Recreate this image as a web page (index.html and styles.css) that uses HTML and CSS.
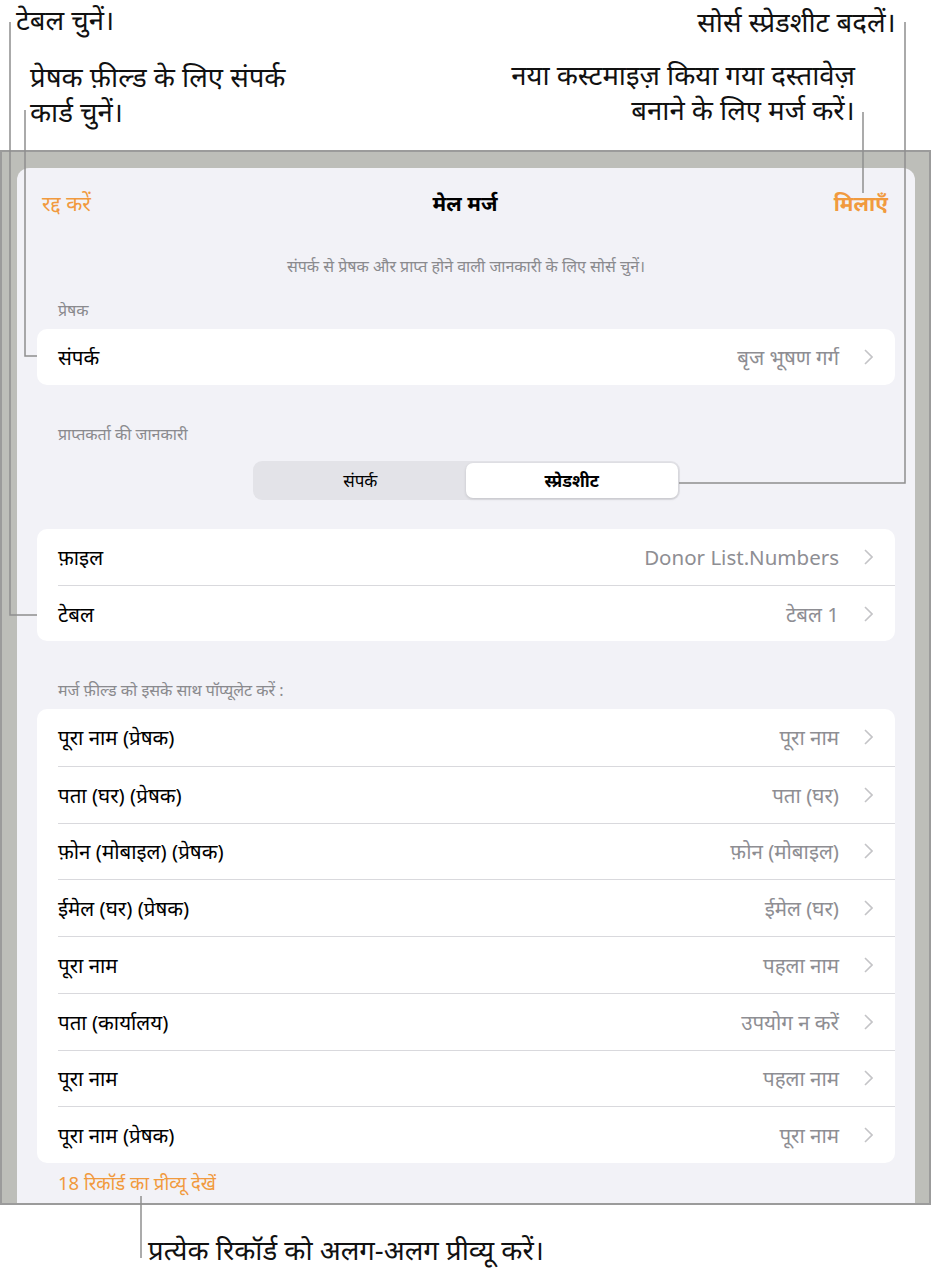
FILE: index.html
```html
<!DOCTYPE html>
<html lang="hi">
<head>
    <meta charset="UTF-8">
    <title>मेल मर्ज</title>
    <link rel="stylesheet" href="styles.css">
</head>
<body>
<div class="page">
    <div class="notes-top">
        <div class="notes-left">
            <p class="note note-table">टेबल चुनें।</p>
            <p class="note note-card">प्रेषक फ़ील्ड के लिए संपर्क<br>कार्ड चुनें।</p>
        </div>
        <div class="notes-right">
            <p class="note note-source">सोर्स स्प्रेडशीट बदलें।</p>
            <p class="note note-merge">नया कस्टमाइज़ किया गया दस्तावेज़<br>बनाने के लिए मर्ज करें।</p>
        </div>
    </div>

    <div class="device">
        <div class="sheet">
            <div class="nav">
                <span class="nav-cancel">रद्द करें</span>
                <span class="nav-title">मेल मर्ज</span>
                <span class="nav-merge">मिलाएँ</span>
            </div>
            <p class="hint">संपर्क से प्रेषक और प्राप्त होने वाली जानकारी के लिए सोर्स चुनें।</p>

            <p class="group-label">प्रेषक</p>
            <ul class="card">
                <li class="row">
                    <span class="row-label">संपर्क</span>
                    <span class="row-value">बृज भूषण गर्ग</span>
                    <svg class="chev" width="9" height="16" viewBox="0 0 9 16"><path d="M1 1l7 7-7 7"/></svg>
                </li>
            </ul>

            <p class="group-label group-label-gap">प्राप्तकर्ता की जानकारी</p>
            <div class="segment">
                <span class="seg-item">संपर्क</span>
                <span class="seg-item seg-on">स्प्रेडशीट</span>
            </div>

            <ul class="card card-file">
                <li class="row">
                    <span class="row-label">फ़ाइल</span>
                    <span class="row-value">Donor List.Numbers</span>
                    <svg class="chev" width="9" height="16" viewBox="0 0 9 16"><path d="M1 1l7 7-7 7"/></svg>
                </li>
                <li class="row">
                    <span class="row-label">टेबल</span>
                    <span class="row-value">टेबल 1</span>
                    <svg class="chev" width="9" height="16" viewBox="0 0 9 16"><path d="M1 1l7 7-7 7"/></svg>
                </li>
            </ul>

            <p class="group-label group-label-gap">मर्ज फ़ील्ड को इसके साथ पॉप्यूलेट करें :</p>
            <ul class="card card-fields">
                <li class="row">
                    <span class="row-label">पूरा नाम (प्रेषक)</span>
                    <span class="row-value">पूरा नाम</span>
                    <svg class="chev" width="9" height="16" viewBox="0 0 9 16"><path d="M1 1l7 7-7 7"/></svg>
                </li>
                <li class="row">
                    <span class="row-label">पता (घर) (प्रेषक)</span>
                    <span class="row-value">पता (घर)</span>
                    <svg class="chev" width="9" height="16" viewBox="0 0 9 16"><path d="M1 1l7 7-7 7"/></svg>
                </li>
                <li class="row">
                    <span class="row-label">फ़ोन (मोबाइल) (प्रेषक)</span>
                    <span class="row-value">फ़ोन (मोबाइल)</span>
                    <svg class="chev" width="9" height="16" viewBox="0 0 9 16"><path d="M1 1l7 7-7 7"/></svg>
                </li>
                <li class="row">
                    <span class="row-label">ईमेल (घर) (प्रेषक)</span>
                    <span class="row-value">ईमेल (घर)</span>
                    <svg class="chev" width="9" height="16" viewBox="0 0 9 16"><path d="M1 1l7 7-7 7"/></svg>
                </li>
                <li class="row">
                    <span class="row-label">पूरा नाम</span>
                    <span class="row-value">पहला नाम</span>
                    <svg class="chev" width="9" height="16" viewBox="0 0 9 16"><path d="M1 1l7 7-7 7"/></svg>
                </li>
                <li class="row">
                    <span class="row-label">पता (कार्यालय)</span>
                    <span class="row-value">उपयोग न करें</span>
                    <svg class="chev" width="9" height="16" viewBox="0 0 9 16"><path d="M1 1l7 7-7 7"/></svg>
                </li>
                <li class="row">
                    <span class="row-label">पूरा नाम</span>
                    <span class="row-value">पहला नाम</span>
                    <svg class="chev" width="9" height="16" viewBox="0 0 9 16"><path d="M1 1l7 7-7 7"/></svg>
                </li>
                <li class="row">
                    <span class="row-label">पूरा नाम (प्रेषक)</span>
                    <span class="row-value">पूरा नाम</span>
                    <svg class="chev" width="9" height="16" viewBox="0 0 9 16"><path d="M1 1l7 7-7 7"/></svg>
                </li>
            </ul>

            <p class="preview-link">18 रिकॉर्ड का प्रीव्यू देखें</p>
        </div>
    </div>

    <p class="note note-preview">प्रत्येक रिकॉर्ड को अलग-अलग प्रीव्यू करें।</p>

    <!-- callout leader lines -->
    <svg class="leaders" width="931" height="1269" viewBox="0 0 931 1269">
        <path d="M10 22V615H37"/>
        <path d="M25 110V356H37"/>
        <path d="M905 22V483H679"/>
        <path d="M863 112V193"/>
        <path d="M141 1196V1258"/>
    </svg>
</div>
</body>
</html>
```

FILE: styles.css
```css
* {
    margin: 0;
    padding: 0;
    box-sizing: border-box;
}

body {
    background: #fff;
    font-family: "Noto Sans", "Noto Sans Devanagari", sans-serif;
    color: #000;
}

.page {
    position: relative;
    width: 931px;
    height: 1269px;
    overflow: hidden;
}

/* callout texts */
.notes-top {
    display: flex;
    justify-content: space-between;
    height: 150px;
}

.note {
    font-size: 27.5px;
    line-height: 34px;
    color: #111;
}

.notes-left {
    padding-left: 16px;
}

.note-table {
    margin-top: 3px;
}

.note-card {
    margin-top: 22px;
    margin-left: 14px;
    line-height: 35px;
}

.notes-right {
    text-align: right;
    padding-right: 35px;
}

.note-source {
    margin-top: 5px;
}

.note-merge {
    margin-top: 18px;
    margin-right: 41px;
    line-height: 35px;
}

.note-preview {
    margin: 28px 0 0 148px;
}

/* ipad frame */
.device {
    height: 1055px;
    border: 2px solid #9b9b9b;
    background: #bdbeb9;
    padding: 16px 14px 0 15px;
    overflow: hidden;
}

.sheet {
    height: 100%;
    background: #f2f2f7;
    border-radius: 12px 12px 0 0;
}

.nav {
    display: flex;
    justify-content: space-between;
    align-items: center;
    height: 70px;
    padding: 0 27px 0 25px;
    font-size: 21px;
}

.nav-cancel {
    color: #f19a3e;
    width: 120px;
}

.nav-title {
    font-weight: 700;
}

.nav-merge {
    color: #f19a3e;
    font-weight: 700;
    width: 120px;
    text-align: right;
}

.hint {
    margin-top: 18px;
    text-align: center;
    font-size: 16px;
    line-height: 20px;
    color: #8a8a8e;
}

.group-label {
    margin: 25px 0 10px;
    padding-left: 41px;
    font-size: 16px;
    line-height: 18px;
    color: #8a8a8e;
}

.group-label-gap {
    margin-top: 40px;
}

.card {
    list-style: none;
    margin: 0 20px;
    background: #fff;
    border-radius: 10px;
    overflow: hidden;
}

.row {
    display: flex;
    align-items: center;
    height: 56px;
    margin-left: 21px;
    padding-right: 22px;
    font-size: 20.5px;
}

.row + .row {
    border-top: 1px solid #d9d9dd;
}

.card-fields .row {
    height: 56.75px;
}

.row-value {
    margin-left: auto;
    color: #8e8e93;
}

.chev {
    margin-left: 25px;
    fill: none;
    stroke: #c4c4c7;
    stroke-width: 1.6;
}

.segment {
    display: grid;
    grid-template-columns: 1fr 1fr;
    width: 427px;
    height: 39px;
    margin: 18px auto 0;
    padding: 2px;
    background: #e3e3e8;
    border-radius: 9px;
    font-size: 17px;
}

.seg-item {
    display: flex;
    align-items: center;
    justify-content: center;
    border-radius: 7px;
}

.seg-on {
    background: #fff;
    font-weight: 700;
    box-shadow: 0 1px 3px rgba(0, 0, 0, 0.15);
}

.card-file {
    margin-top: 29px;
}

.preview-link {
    margin-top: 10px;
    padding-left: 41px;
    font-size: 18.5px;
    line-height: 20px;
    color: #f19a3e;
}

.leaders {
    position: absolute;
    top: 0;
    left: 0;
    fill: none;
    stroke: #8f8f8f;
    stroke-width: 1.5;
    pointer-events: none;
}
```
